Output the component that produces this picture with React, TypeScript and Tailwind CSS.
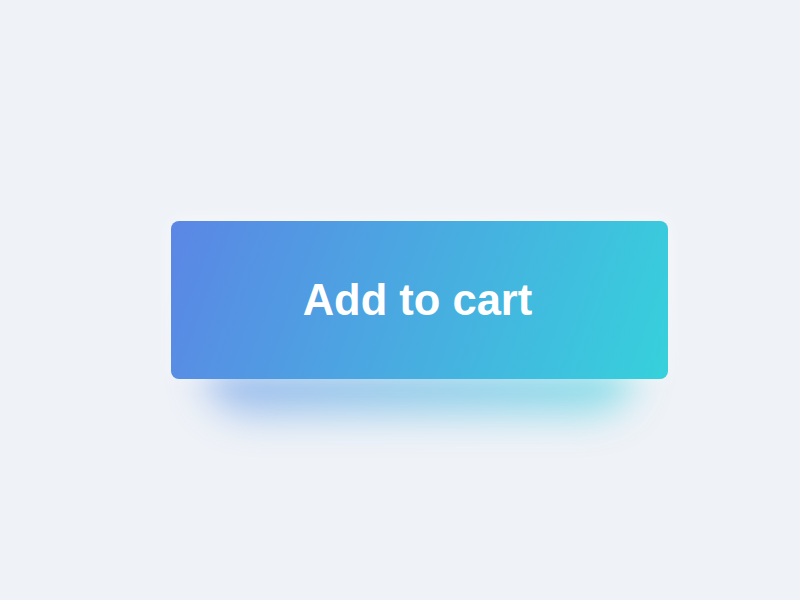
const App = () => {
  return (
    <div className="w-[800px] h-[600px] bg-[#eff2f7] flex items-center justify-center overflow-hidden">
      <div className="relative ml-[39px] w-[497px] h-[158px]">
        {/* soft glow under the button */}
        <div className="absolute left-[36px] right-[36px] top-[60px] bottom-[-34px] rounded-[40px] bg-linear-[110deg] from-[#5b86e5] to-[#36d1dc] blur-[20px] opacity-55"></div>
        <button className="relative w-full h-full rounded-[8px] bg-linear-[110deg] from-[#5b86e5] to-[#36d1dc] text-white font-bold text-[43.5px] leading-none font-['Liberation_Sans',Arial,sans-serif] shadow-[0_0_20px_rgba(255,255,255,0.5)]">
          <span className="relative -left-[2px] top-[1px]">Add to cart</span>
        </button>
      </div>
    </div>
  );
};

export default App;
